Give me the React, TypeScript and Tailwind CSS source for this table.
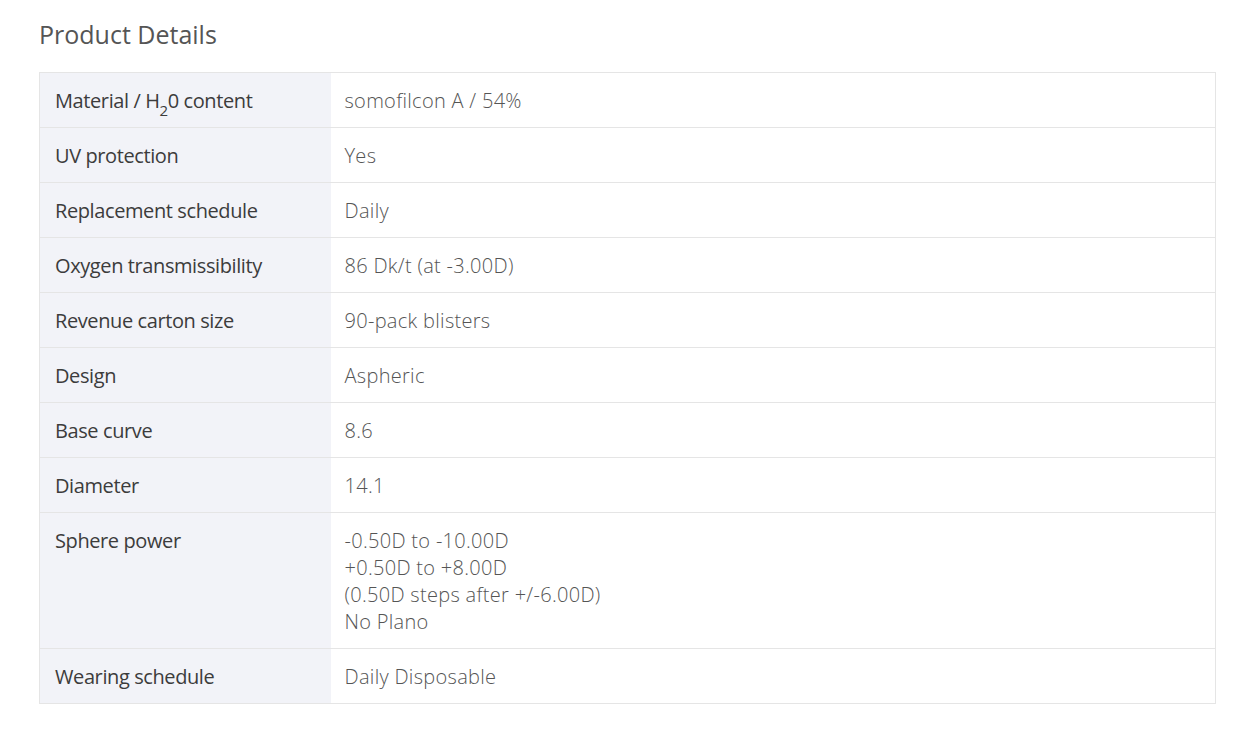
import React from 'react';

const rows: { label: React.ReactNode; value: string[] }[] = [
  {
    label: (
      <>
        Material / H<sub className="text-[15px] align-[-4px]">2</sub>0 content
      </>
    ),
    value: ['somofilcon A / 54%'],
  },
  { label: 'UV protection', value: ['Yes'] },
  { label: 'Replacement schedule', value: ['Daily'] },
  { label: 'Oxygen transmissibility', value: ['86 Dk/t (at -3.00D)'] },
  { label: 'Revenue carton size', value: ['90-pack blisters'] },
  { label: 'Design', value: ['Aspheric'] },
  { label: 'Base curve', value: ['8.6'] },
  { label: 'Diameter', value: ['14.1'] },
  {
    label: 'Sphere power',
    value: ['-0.50D to -10.00D', '+0.50D to +8.00D', '(0.50D steps after +/-6.00D)', 'No Plano'],
  },
  { label: 'Wearing schedule', value: ['Daily Disposable'] },
];

export default function App() {
  return (
    <div className="min-h-screen bg-white pl-[39px] pr-[19px] pt-[16px] font-['Open_Sans','Noto_Sans',sans-serif]">
      <h2 className="text-[25px] leading-[36px] text-[#555] mb-[20px]">Product Details</h2>
      <table className="w-full border-collapse border border-[#e5e5e5] text-[20px] leading-[27px]">
        <tbody>
          {rows.map((row, i) => (
            <tr key={i} className="border-b border-[#e5e5e5]">
              <th className="w-[291px] bg-[#f2f3f8] pl-[15px] pt-[14px] pb-[13px] text-left align-top font-medium text-[#3c3c3c] tracking-[-0.4px]">
                {row.label}
              </th>
              <td className="pl-[14px] pt-[14px] pb-[13px] align-top font-light text-[#555] tracking-[0.3px]">
                {row.value.map((v, j) => (
                  <div key={j}>{v}</div>
                ))}
              </td>
            </tr>
          ))}
        </tbody>
      </table>
    </div>
  );
}
